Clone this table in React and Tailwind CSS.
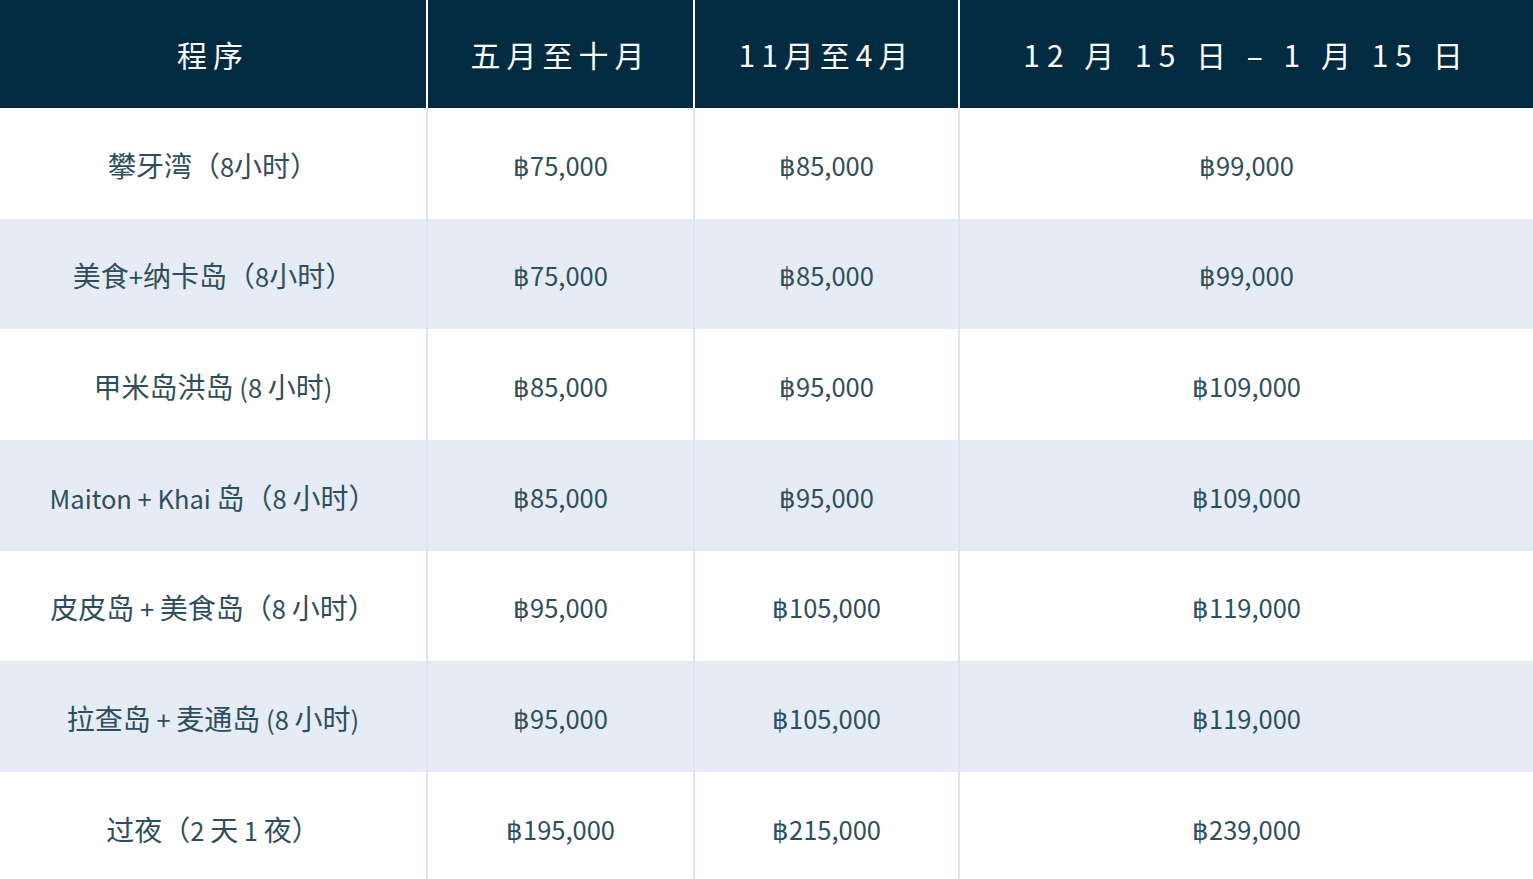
import React from "react";

const HEADERS = ["程序", "五月至十月", "11月至4月", "12 月 15 日 – 1 月 15 日"];

const ROWS = [
  ["攀牙湾（8小时）", "฿75,000", "฿85,000", "฿99,000"],
  ["美食+纳卡岛（8小时）", "฿75,000", "฿85,000", "฿99,000"],
  ["甲米岛洪岛 (8 小时)", "฿85,000", "฿95,000", "฿109,000"],
  ["Maiton + Khai 岛（8 小时）", "฿85,000", "฿95,000", "฿109,000"],
  ["皮皮岛 + 美食岛（8 小时）", "฿95,000", "฿105,000", "฿119,000"],
  ["拉查岛 + 麦通岛 (8 小时)", "฿95,000", "฿105,000", "฿119,000"],
  ["过夜（2 天 1 夜）", "฿195,000", "฿215,000", "฿239,000"],
];

const WIDTHS = ["w-[427px]", "w-[267px]", "w-[265px]", "w-[574px]"];

// latin runs are set a touch smaller than the CJK ones, like the original page
function Mixed({ text }) {
  const parts = text.split(/([\u3000-\u9fff\uff00-\uffef]+)/).filter(Boolean);
  return parts.map((p, i) =>
    /[\u3000-\u9fff\uff00-\uffef]/.test(p)
      ? <span key={i} className="text-[28px]">{p}</span>
      : <span key={i} className="text-[25.5px]">{p}</span>
  );
}

export default function App() {
  return (
    <div className="w-[1533px] h-[879px] overflow-hidden bg-white [font-family:'Noto_Sans_CJK_SC','Noto_Sans',sans-serif]">
      <table className="w-full border-collapse table-fixed">
        <thead>
          <tr className="bg-[#022b42] h-[108px]">
            {HEADERS.map((h, i) => (
              <th key={i}
                className={`${WIDTHS[i]} ${i > 0 ? "border-l-2 border-white" : ""} ${i === 3 ? "tracking-[7px]" : "tracking-[6px]"} text-white text-[30px] font-normal text-center align-middle`}>
                {h}
              </th>
            ))}
          </tr>
        </thead>
        <tbody>
          {ROWS.map((row, r) => (
            <tr key={r} className={`h-[110.7px] ${r % 2 === 1 ? "bg-[#e5ecf5]" : "bg-white"}`}>
              {row.map((cell, i) => (
                <td key={i}
                  className={`${i > 0 ? "border-l-2 border-[#dce4ef]" : ""} text-[#2f4e5d] text-[27px] text-center align-middle pt-[3px]`}>
                  <Mixed text={cell} />
                </td>
              ))}
            </tr>
          ))}
        </tbody>
      </table>
    </div>
  );
}
